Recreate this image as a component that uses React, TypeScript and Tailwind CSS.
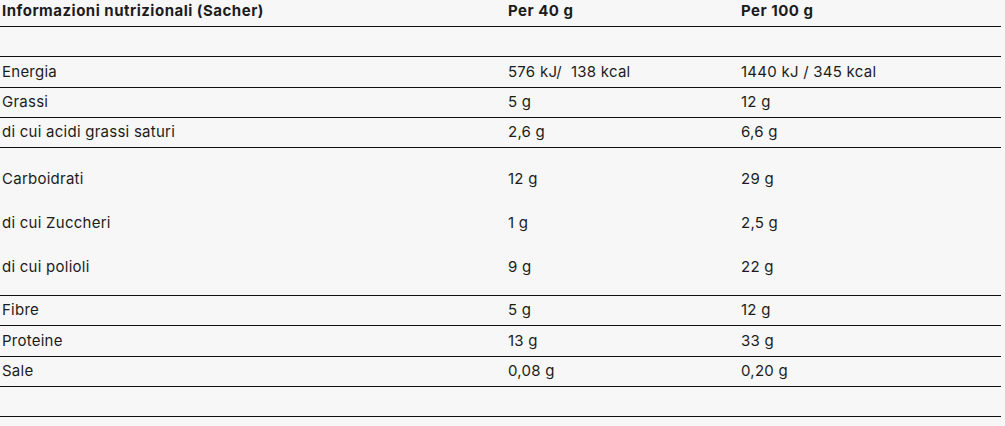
import React from 'react';

type Row = { label: string; a: string; b: string };

const topRows: Row[] = [
  { label: '', a: '', b: '' },
  { label: 'Energia', a: '576 kJ/  138 kcal', b: '1440 kJ / 345 kcal' },
  { label: 'Grassi', a: '5 g', b: '12 g' },
  { label: 'di cui acidi grassi saturi', a: '2,6 g', b: '6,6 g' },
];

const carbRows: Row[] = [
  { label: 'Carboidrati', a: '12 g', b: '29 g' },
  { label: 'di cui Zuccheri', a: '1 g', b: '2,5 g' },
  { label: 'di cui polioli', a: '9 g', b: '22 g' },
];

const bottomRows: Row[] = [
  { label: 'Fibre', a: '5 g', b: '12 g' },
  { label: 'Proteine', a: '13 g', b: '33 g' },
  { label: 'Sale', a: '0,08 g', b: '0,20 g' },
  { label: '', a: '', b: '' },
];

function Cells({ row }: { row: Row }) {
  return (
    <>
      <div className="w-[508px] pl-[2px] whitespace-pre">{row.label}</div>
      <div className="w-[233px] whitespace-pre">{row.a}</div>
      <div className="flex-1 whitespace-pre">{row.b}</div>
    </>
  );
}

export default function App() {
  return (
    <div
      className="w-[1005px] h-[426px] bg-[#f7f7f7] text-[#1c1c1c] text-[15px] tracking-[0.25px] overflow-hidden"
      style={{ fontFamily: 'Inter, "Open Sans", sans-serif' }}
    >
      <div className="w-[1001px]">
        {/* intestazione */}
        <div className="flex h-[27px] items-center font-bold tracking-[0.5px] border-b border-[#111] pb-[4px]">
          <Cells row={{ label: 'Informazioni nutrizionali (Sacher)', a: 'Per 40 g', b: 'Per 100 g' }} />
        </div>

        {topRows.map((r, i) => (
          <div key={i} className="flex h-[30.25px] items-center border-b border-[#111]">
            <Cells row={r} />
          </div>
        ))}

        {/* carboidrati */}
        <div className="flex flex-col h-[148px] pt-[20px] gap-[22px] border-b border-[#111]">
          {carbRows.map((r, i) => (
            <div key={i} className="flex h-[22px] items-center">
              <Cells row={r} />
            </div>
          ))}
        </div>

        {bottomRows.map((r, i) => (
          <div key={i} className="flex h-[30.25px] items-center border-b border-[#111]">
            <Cells row={r} />
          </div>
        ))}
      </div>
    </div>
  );
}
